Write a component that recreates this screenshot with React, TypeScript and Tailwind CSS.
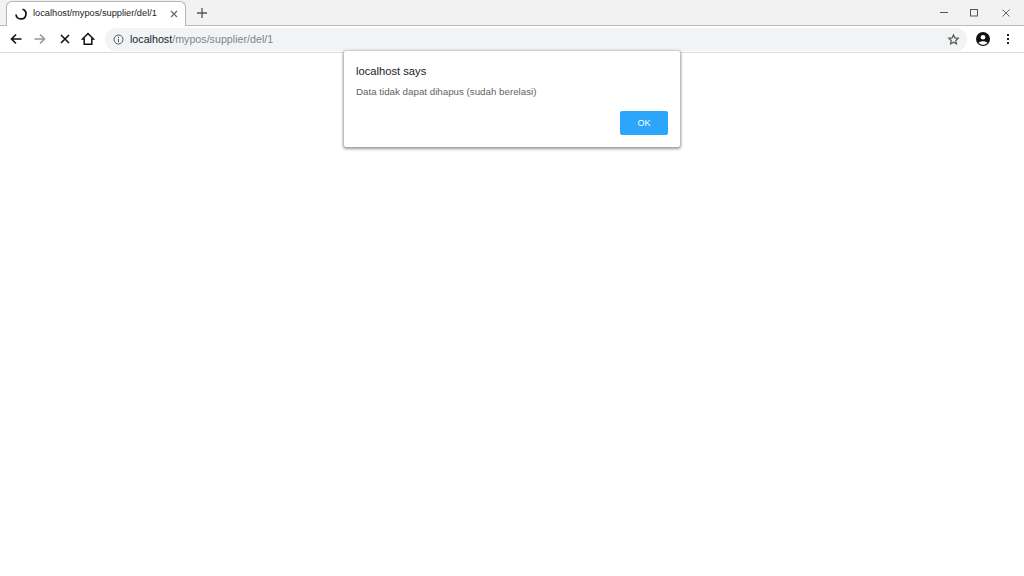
import React from 'react';

const Tab = () => (
  <div className="relative mt-[1px] flex h-[25px] w-[180px] ml-[6px] items-center rounded-t-[6px] border border-b-0 border-[#b4b6b8] bg-white pl-[8px] pr-[7px]">
    <svg width="12" height="12" viewBox="0 0 12 12" fill="none" className="mr-[6px] shrink-0">
      <path d="M7.5 1.2 A5 5 0 1 1 1 6.5" stroke="#111" strokeWidth="1.7" fill="none" />
    </svg>
    <span className="flex-1 truncate text-[9.25px] text-[#222]">localhost/mypos/supplier/del/1</span>
    <svg width="8" height="8" viewBox="0 0 8 8" className="shrink-0">
      <path d="M1 1L7 7M7 1L1 7" stroke="#666" strokeWidth="1.2" />
    </svg>
  </div>
);

const App = () => {
  return (
    <div className="flex h-[576px] w-[1024px] flex-col overflow-hidden bg-white font-['Liberation_Sans',Arial,sans-serif]">
      {/* tab strip */}
      <div className="flex h-[26px] items-start border-b border-[#b8babc] bg-[#f2f2f2]">
        <Tab />
        <svg width="12" height="12" viewBox="0 0 12 12" className="ml-[10px] mt-[7px]">
          <path d="M6 1V11M1 6H11" stroke="#555" strokeWidth="1.3" />
        </svg>
        <div className="ml-auto flex items-center">
          <svg width="10" height="10" viewBox="0 0 10 10" className="mr-[20px] mt-[8px]">
            <path d="M1 4.5H9" stroke="#555" strokeWidth="1" />
          </svg>
          <svg width="10" height="10" viewBox="0 0 10 10" className="mr-[22px] mt-[8px]">
            <rect x="1.5" y="1.5" width="7" height="6.5" fill="none" stroke="#555" strokeWidth="1" />
          </svg>
          <svg width="10" height="10" viewBox="0 0 10 10" className="mr-[13px] mt-[8px]">
            <path d="M1.5 1.5L8.5 8.5M8.5 1.5L1.5 8.5" stroke="#666" strokeWidth="1" />
          </svg>
        </div>
      </div>
      {/* toolbar */}
      <div className="flex h-[27px] items-center border-b border-[#dcdcdc] bg-white">
        <svg width="14" height="14" viewBox="0 0 14 14" className="ml-[9px]">
          <path d="M12.5 7H2.5M7 2.5L2.5 7L7 11.5" fill="none" stroke="#111" strokeWidth="1.6" />
        </svg>
        <svg width="14" height="14" viewBox="0 0 14 14" className="ml-[10px]">
          <path d="M1.5 7H11.5M7 2.5L11.5 7L7 11.5" fill="none" stroke="#999" strokeWidth="1.6" />
        </svg>
        <svg width="12" height="12" viewBox="0 0 12 12" className="ml-[12px]">
          <path d="M2 2L10 10M10 2L2 10" stroke="#111" strokeWidth="1.6" />
        </svg>
        <svg width="14" height="14" viewBox="0 0 14 14" className="ml-[10px]">
          <path d="M7 1.5L1.5 7H3.2V12.3H10.8V7H12.5Z" fill="none" stroke="#111" strokeWidth="1.5" />
        </svg>
        <div className="ml-[10px] flex h-[23px] w-[862px] items-center rounded-full bg-[#f1f3f4] pl-[8px]">
          <svg width="11" height="11" viewBox="0 0 11 11" className="shrink-0">
            <circle cx="5.5" cy="5.5" r="4.5" fill="none" stroke="#555" strokeWidth="1" />
            <path d="M5.5 4.8V8.2M5.5 2.8V3.9" stroke="#555" strokeWidth="1" />
          </svg>
          <span className="ml-[6px] text-[10.7px] leading-none text-[#202124]">
            localhost<span className="text-[#80868b]">/mypos/supplier/del/1</span>
          </span>
          <svg width="13" height="13" viewBox="0 0 24 24" className="ml-auto mr-[7px]">
            <path d="M12 3.5l2.6 5.6 6.1.7-4.5 4.2 1.2 6-5.4-3-5.4 3 1.2-6-4.5-4.2 6.1-.7z" fill="none" stroke="#555" strokeWidth="2.2" />
          </svg>
        </div>
        <svg width="14" height="14" viewBox="0 0 24 24" className="ml-[9px]">
          <circle cx="12" cy="12" r="12" fill="#111" />
          <circle cx="12" cy="9" r="4" fill="#fff" />
          <path d="M4.5 18.5C7 15 17 15 19.5 18.5C17.5 21 14.5 22 12 22S6.5 21 4.5 18.5Z" fill="#fff" />
        </svg>
        <div className="ml-[17px] flex flex-col gap-[2px]">
          <div className="h-[2px] w-[2px] bg-[#222]" />
          <div className="h-[2px] w-[2px] bg-[#222]" />
          <div className="h-[2px] w-[2px] bg-[#222]" />
        </div>
      </div>
      {/* alert dialog */}
      <div className="absolute left-[344px] top-[51px] h-[96px] w-[336px] rounded-[2px] bg-white px-[12px] pt-[13px] shadow-[0_1px_3px_1px_rgba(0,0,0,0.4)]">
        <div className="text-[11.2px] leading-[14px] text-[#202124]">localhost says</div>
        <div className="mt-[8px] text-[9.75px] leading-[12px] text-[#5f6368]">Data tidak dapat dihapus (sudah berelasi)</div>
        <div className="mt-[13px] flex justify-end">
          <button className="h-[24px] w-[48px] rounded-[2px] bg-[#2ba6fb] pt-[1px] text-[9px] text-white">OK</button>
        </div>
      </div>
    </div>
  );
};

export default App;
